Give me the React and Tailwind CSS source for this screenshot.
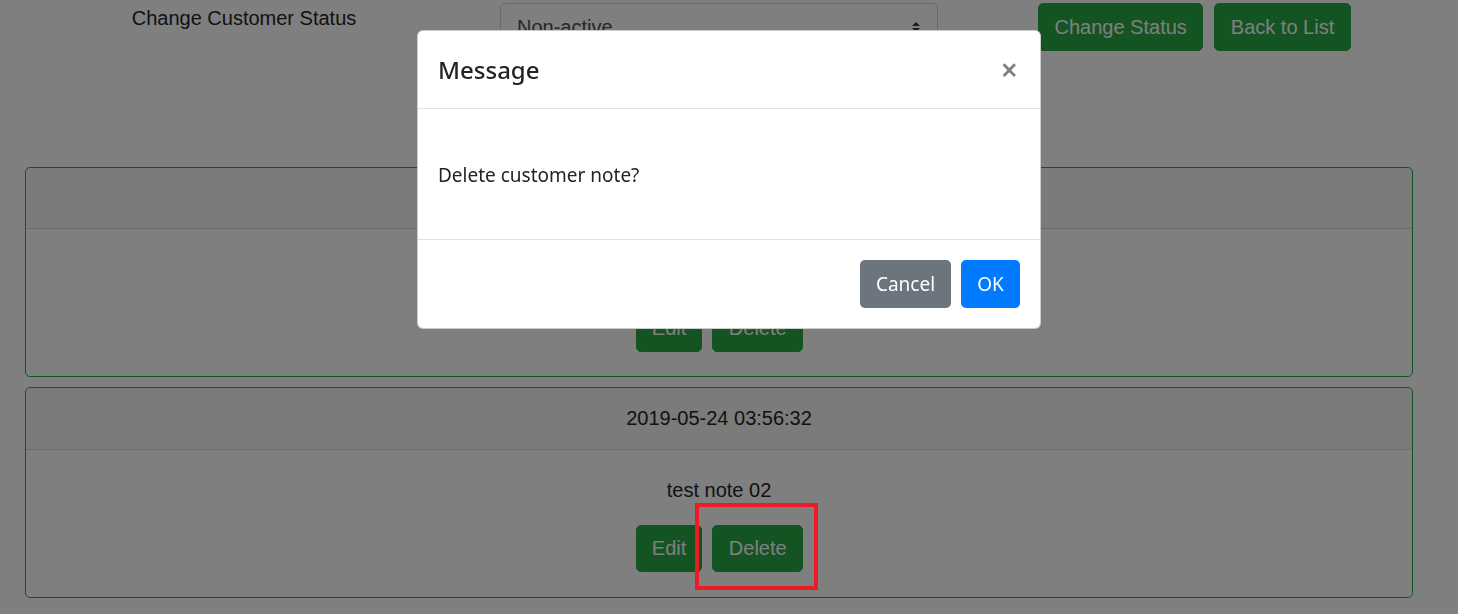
import { useState } from 'react'

const notes = [
  { id: 1, date: '2019-05-24 03:55:10', text: 'test note 01' },
  { id: 2, date: '2019-05-24 03:56:32', text: 'test note 02' },
]

function GreenButton({ children, className = '' }) {
  return (
    <button className={`h-[47.5px] px-[15.5px] rounded-[5px] bg-[#28a745] border border-[#28a745] text-white text-[20px] leading-[30px] ${className}`}>
      {children}
    </button>
  )
}

function NoteCard({ note }) {
  return (
    <div className="border border-[#28a745] rounded-[5px] text-center">
      <div className="h-[61.5px] flex items-center justify-center bg-black/[0.03] border-b border-black/[0.125]">
        {note.date}
      </div>
      <div className="px-[25px] pt-[25px] pb-[24.5px]">
        <p className="mb-[20px] leading-[30px]">{note.text}</p>
        <div className="flex justify-center gap-[10px] pl-[1px]">
          <GreenButton className="px-[15px]">Edit</GreenButton>
          <GreenButton>Delete</GreenButton>
        </div>
      </div>
    </div>
  )
}

function ConfirmModal() {
  return (
    <div className="fixed inset-0 z-10 bg-black/50">
      <div
        className="mx-auto mt-[30px] w-[624px] bg-white border border-black/20 rounded-[6px] text-[#212529]"
        style={{ fontFamily: '"Noto Sans", "Open Sans", sans-serif' }}
      >
        <div className="flex items-center justify-between px-[20px] h-[78px] border-b border-[#dee2e6]">
          <h5 className="text-[24px] font-medium leading-[30px]">Message</h5>
          <button className="text-[30px] font-semibold leading-none text-black/50 mr-[2px]">×</button>
        </div>
        <div className="px-[20px] pt-[51px] pb-[49px] text-[19px] leading-[30px]">
          Delete customer note?
        </div>
        <div className="flex justify-end gap-[10px] px-[20px] pt-[20px] pb-[20px] border-t border-[#dee2e6]">
          <button className="h-[47.5px] w-[91px] rounded-[5px] bg-[#6c757d] text-white text-[19px]">Cancel</button>
          <button className="h-[47.5px] w-[59px] rounded-[5px] bg-[#007bff] text-white text-[19px]">OK</button>
        </div>
      </div>
    </div>
  )
}

export default function App() {
  const [status] = useState('Non-active')

  return (
    <div
      className="relative w-[1458px] h-[614px] overflow-hidden bg-white text-[#212529] text-[20px] leading-[30px]"
      style={{ fontFamily: '"Liberation Sans", Arial, sans-serif' }}
    >
      <div className="flex items-start pt-[3px]">
        <div className="w-[488px] text-center">Change Customer Status</div>
        <div className="ml-[12px] w-[438px] h-[47.5px] border border-[#ced4da] rounded-[5px] flex items-center justify-between pl-[16px] pr-[16px] text-[#495057]">
          <span>{status}</span>
          <svg width="10" height="14" viewBox="0 0 10 14">
            <path d="M5 2 L9 6 L1 6 Z" fill="#343a40" />
            <path d="M5 12 L9 8 L1 8 Z" fill="#343a40" />
          </svg>
        </div>
        <div className="ml-[100px] flex gap-[11px]">
          <GreenButton>Change Status</GreenButton>
          <GreenButton>Back to List</GreenButton>
        </div>
      </div>

      <div className="mx-[25px] mt-[116px] w-[1388px] flex flex-col gap-[10px]">
        {notes.map(n => <NoteCard key={n.id} note={n} />)}
      </div>

      <ConfirmModal />

      <div className="absolute z-20 left-[695px] top-[503px] w-[123px] h-[87px] border-4 border-[#ed1c24]" />
    </div>
  )
}
